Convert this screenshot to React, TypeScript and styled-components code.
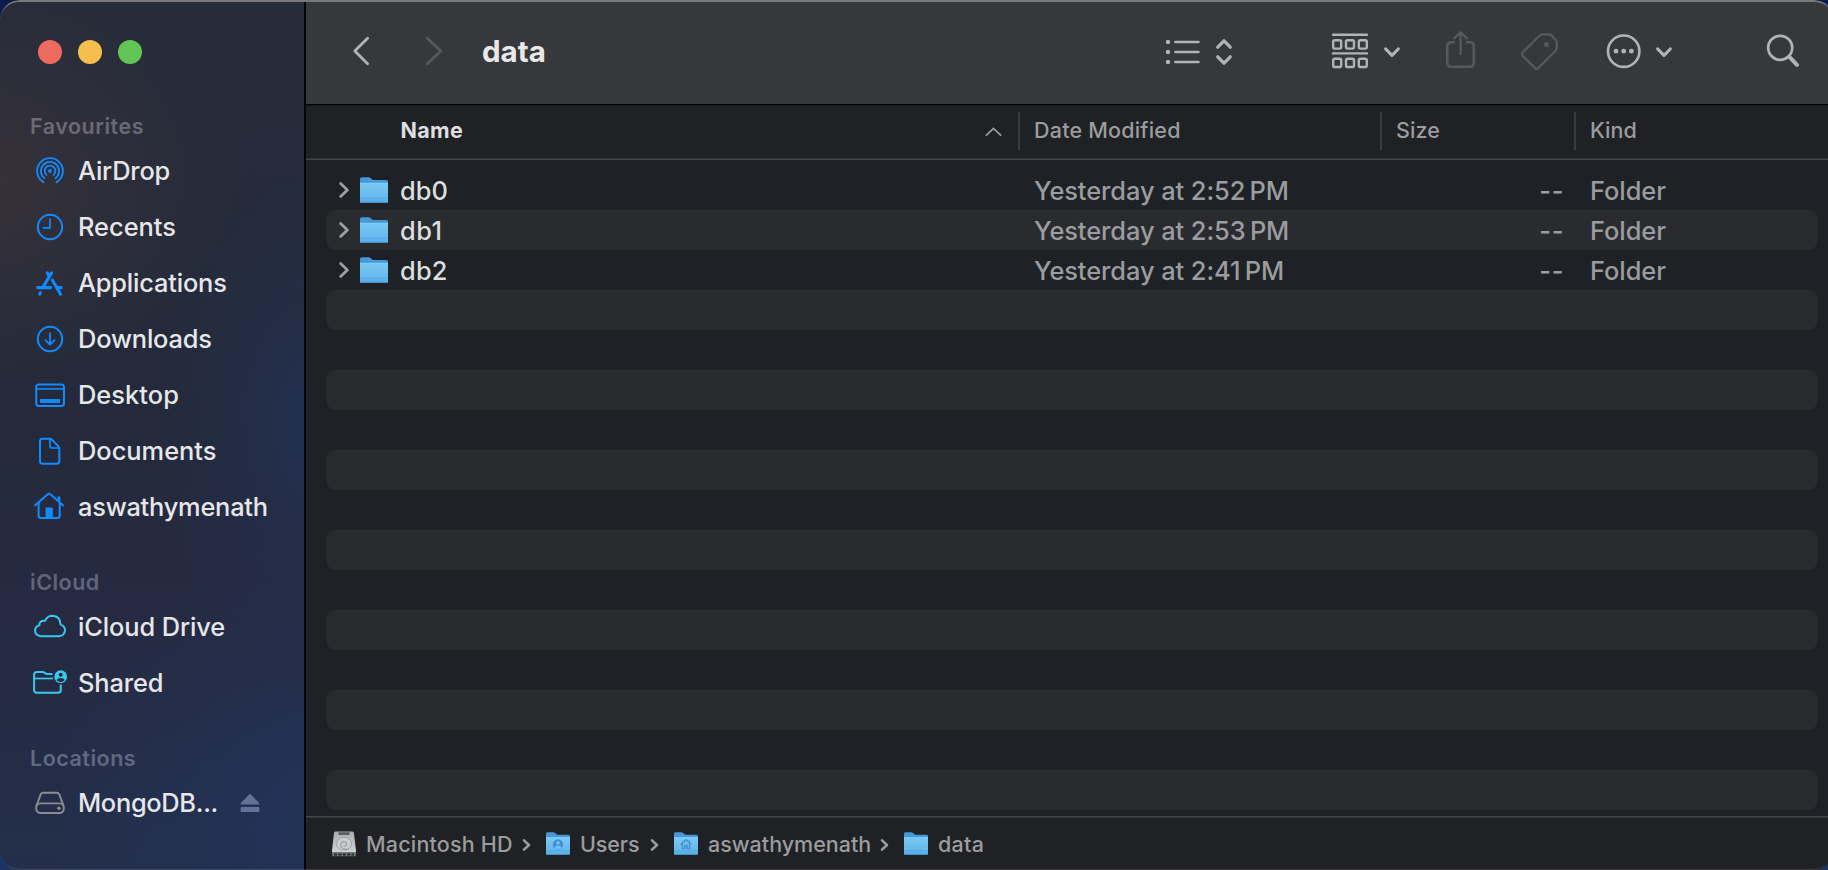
import React from "react";
import styled, { createGlobalStyle } from "styled-components";

const GlobalStyle = createGlobalStyle`
  *, *::before, *::after { box-sizing: border-box; }
  body { margin: 0; }
`;

const BLUE = "#118bff";
const CYAN = "#38c9ee";
const BRIGHT = "#b2b3b7";
const DIM = "#58595d";

const Desktop = styled.div`
  width: 1828px;
  height: 870px;
  overflow: hidden;
  position: relative;
  background: linear-gradient(180deg, #0b1d4c 0%, #0b1d4c 60%, #1b3560 100%);
  font-family: Inter, "Liberation Sans", sans-serif;
  font-weight: 500;
`;

const Window = styled.div`
  display: flex;
  width: 1834px;
  height: 870px;
  border-radius: 20px;
  overflow: hidden;
  position: relative;
`;

const WindowRim = styled.div`
  position: absolute;
  inset: 0;
  border-radius: 20px;
  border-top: 2px solid #77797d;
  border-bottom: 1px solid rgba(150, 152, 160, 0.25);
  pointer-events: none;
`;

const Text = styled.span<{ $track?: number }>`
  letter-spacing: ${(p) => p.$track ?? 0}px;
  white-space: pre;
`;

/* ---------- Sidebar ---------- */

const Sidebar = styled.nav`
  width: 306px;
  flex: none;
  display: flex;
  flex-direction: column;
  border-right: 2px solid #040507;
  background:
    radial-gradient(ellipse 260px 210px at -20px 180px, rgba(60, 51, 56, 0.8), rgba(60, 51, 56, 0.35) 50%, rgba(60, 51, 56, 0) 100%),
    radial-gradient(ellipse 160px 250px at 320px 425px, rgba(33, 50, 88, 0.85), rgba(33, 50, 88, 0.3) 50%, rgba(33, 50, 88, 0) 100%),
    radial-gradient(ellipse 280px 260px at 330px 820px, rgba(34, 51, 90, 0.95), rgba(34, 51, 90, 0.45) 50%, rgba(34, 51, 90, 0) 100%),
    linear-gradient(180deg, #262c3a 0%, #242a3b 50%, #262a41 66%, #252b43 78%, #232f4a 100%);
`;

const TrafficLights = styled.div`
  display: flex;
  gap: 16px;
  padding: 40px 0 0 38px;
  height: 109px;
`;

const Light = styled.span<{ $color: string }>`
  width: 24px;
  height: 24px;
  border-radius: 50%;
  background: ${(p) => p.$color};
`;

const Section = styled.section`
  display: flex;
  flex-direction: column;
  margin-bottom: 30px;
`;

const SectionTitle = styled.h2<{ $color: string }>`
  margin: 0;
  height: 34px;
  line-height: 34px;
  padding-left: 30px;
  font-size: 21.5px;
  font-weight: 600;
  letter-spacing: 0.5px;
  color: ${(p) => p.$color};
`;

const SidebarItem = styled.a`
  display: flex;
  align-items: center;
  height: 56px;
  padding-left: 32px;
  font-size: 25.4px;
  color: #e6e7ea;
`;

const ItemLabel = styled(Text)`
  padding-bottom: 2px;
`;

const ItemIcon = styled.svg<{ $color: string }>`
  width: 36px;
  height: 36px;
  flex: none;
  margin-right: 10px;
  fill: none;
  stroke: ${(p) => p.$color};
  stroke-width: 2;
  stroke-linecap: round;
  stroke-linejoin: round;
`;

const EjectIcon = styled.svg`
  width: 20px;
  height: 20px;
  margin: 0 0 1px 22px;
  fill: #65719a;
`;

/* ---------- Main pane ---------- */

const Main = styled.main`
  flex: 1;
  display: flex;
  flex-direction: column;
  background: #1e2125;
`;

const Toolbar = styled.header`
  display: flex;
  align-items: center;
  height: 105px;
  padding: 0 0 2px 44px;
  background: #37383b;
  border-bottom: 1px solid #000;
`;

const ToolGlyph = styled.svg<{ $before?: number; $color?: string; $weight?: number }>`
  flex: none;
  height: 40px;
  margin-left: ${(p) => p.$before ?? 0}px;
  fill: none;
  stroke: ${(p) => p.$color ?? BRIGHT};
  stroke-width: ${(p) => p.$weight ?? 2.6};
  stroke-linecap: round;
  stroke-linejoin: round;
`;

const Title = styled.h1`
  margin: 0 0 0 37px;
  width: 681px;
  font-size: 29.5px;
  font-weight: 700;
  color: #e8e8e9;
`;

const HeaderRow = styled.div`
  display: grid;
  grid-template-columns: 712px 362px 194px 1fr;
  align-items: center;
  height: 55px;
  padding-bottom: 5px;
  background: #202124;
  border-top: 1px solid #17181a;
  border-bottom: 1px solid #44474a;
  box-shadow: inset 0 -1px #2e3033;
  font-size: 21.5px;
  color: #9b9c9f;
`;

const NameHeader = styled.div`
  display: flex;
  align-items: center;
  justify-content: space-between;
  padding: 0 16px 0 94.5px;
  font-weight: 700;
  color: #dedee0;
`;

const ColumnHeader = styled.div`
  display: flex;
  align-items: center;
  gap: 14px;
  height: 38px;

  &::before {
    content: "";
    width: 2px;
    height: 38px;
    margin-top: 2px;
    background: #3a3b3f;
  }
`;

const Rows = styled.div`
  flex: 1;
  padding: 10px 16px 0 20px;
`;

const Row = styled.div<{ $striped: boolean }>`
  display: grid;
  grid-template-columns: 708px 341px 189px 1fr;
  align-items: center;
  height: 40px;
  border-radius: 10px;
  background: ${(p) => (p.$striped ? "#2a2b2f" : "transparent")};
  font-size: 25.4px;
  color: #9b9c9f;
`;

const NameCell = styled.div`
  display: flex;
  align-items: center;
  padding-left: 12px;
  color: #dcdddf;
`;

const SizeCell = styled.div`
  text-align: right;
`;

const KindCell = styled.div`
  padding-left: 26px;
`;

const Disclosure = styled.svg`
  width: 12px;
  height: 18px;
  margin-right: 10px;
  fill: none;
  stroke: #9fa0a3;
  stroke-width: 2.8;
  stroke-linecap: round;
  stroke-linejoin: round;
`;

const FolderSvg = styled.svg<{ $w: number; $h: number; $right: number; $lift: number }>`
  width: ${(p) => p.$w}px;
  height: ${(p) => p.$h}px;
  margin: 0 ${(p) => p.$right}px ${(p) => p.$lift}px 0;
  flex: none;
`;

const PathBar = styled.footer`
  display: flex;
  align-items: center;
  height: 54px;
  padding: 1px 0 0 25px;
  border-top: 1px solid #434649;
  box-shadow: inset 0 1px #313336;
  background: #202124;
  font-size: 21.5px;
  color: #9b9c9f;
`;

const Crumb = styled.div<{ $width: number }>`
  display: flex;
  align-items: center;
  width: ${(p) => p.$width}px;
`;

const CrumbArrow = styled.svg`
  width: 9px;
  height: 14px;
  margin-right: 15px;
  margin-top: 2px;
  fill: none;
  stroke: #9b9c9f;
  stroke-width: 2.6;
  stroke-linecap: round;
  stroke-linejoin: round;
`;

const DiskSvg = styled.svg`
  width: 26px;
  height: 26px;
  margin-right: 9px;
  flex: none;
`;

/* ---------- Drawings ---------- */

type FolderProps = { small?: boolean; badge?: "user" | "home" };

function Folder({ small, badge }: FolderProps) {
  return (
    <FolderSvg
      viewBox="0 0 28 26"
      preserveAspectRatio="none"
      $w={small ? 24 : 28}
      $h={small ? 23 : 26}
      $right={small ? 10 : 12}
      $lift={small ? 2 : 0}
    >
      <defs>
        <linearGradient id="folderFront" x1="0" y1="0" x2="0" y2="1">
          <stop offset="0" stopColor="#7ac8f6" />
          <stop offset="0.75" stopColor="#66b8ec" />
          <stop offset="1" stopColor="#55a9e2" />
        </linearGradient>
      </defs>
      <path d="M0 2Q0 0.2 1.8 0.2H8.5Q9.6 0.2 10.5 1L12 2.4Q12.8 3.1 14 3.1H26.4Q28 3.1 28 4.8V12H0Z" fill="#4599d8" />
      <path d="M0 5.9H28V24.4Q28 26 26.4 26H1.6Q0 26 0 24.4Z" fill="url(#folderFront)" />
      <path d="M0 6.2H28" stroke="#8ad2fa" strokeWidth="0.7" />
      <path d="M0 21.2H28" stroke="#4b9fd8" strokeWidth="0.7" />
      <path d="M0.4 25.5H27.6" stroke="#3f8fca" strokeWidth="0.9" />
      {badge === "user" && (
        <g>
          <circle cx="14" cy="14" r="5.9" fill="#3f8fd3" />
          <circle cx="14" cy="12.3" r="2.1" fill="#74c2f2" />
          <path d="M10 17.8Q10.6 15.4 14 15.4T18 17.8Q16.4 19.2 14 19.2T10 17.8Z" fill="#74c2f2" />
        </g>
      )}
      {badge === "home" && (
        <path
          d="M14 8.6L7.7 14.2M14 8.6L20.3 14.2M9.8 13V18.6H12.6V15.2H15.4V18.6H18.2V13M18 9.2V11.4"
          fill="none"
          stroke="#4894d2"
          strokeWidth="1.7"
        />
      )}
    </FolderSvg>
  );
}

function Disk() {
  return (
    <DiskSvg viewBox="0 0 26 26">
      <defs>
        <linearGradient id="diskTop" x1="0" y1="0" x2="0" y2="1">
          <stop offset="0" stopColor="#a9adb0" />
          <stop offset="1" stopColor="#cfd4d7" />
        </linearGradient>
      </defs>
      <path d="M4.6 0.6H21.2Q22.6 0.6 22.9 2L25 19.4V21.4H1V19.4L3 2Q3.2 0.6 4.6 0.6Z" fill="url(#diskTop)" />
      <path d="M1 21H25V23.8Q25 25.2 23.6 25.2H2.4Q1 25.2 1 23.8Z" fill="#6f7676" />
      <path d="M3 23.4H23" stroke="#242728" strokeWidth="2" strokeDasharray="3 1.4" />
      <path d="M7.4 2.6H18.6" stroke="#54585c" strokeWidth="2.6" />
      <ellipse cx="13" cy="12.8" rx="7.6" ry="6.4" fill="#c8cdd0" stroke="#9a9fa3" strokeWidth="0.8" />
      <path d="M17.6 18.4Q10 18.8 9.6 13.6Q9.8 10.4 13 10.6Q16 11 15.6 13.6Q15 15.6 12.6 15" fill="none" stroke="#84898d" strokeWidth="0.9" />
    </DiskSvg>
  );
}

const icons: Record<string, React.ReactNode> = {
  airdrop: (
    <g strokeWidth="1.8">
      <path d="M11.6 29.2A12.9 12.9 0 1 1 24.4 29.2" />
      <path d="M12.4 25.2A9.1 9.1 0 1 1 23.6 25.2" />
      <path d="M14.4 21.8A5.3 5.3 0 1 1 21.6 21.8" />
      <circle cx="18" cy="18" r="1.9" fill={BLUE} stroke="none" />
    </g>
  ),
  recents: (
    <g>
      <circle cx="18" cy="18" r="12.2" />
      <path d="M18 10.2V18.8H11.4" strokeWidth="1.7" />
    </g>
  ),
  applications: (
    <g strokeWidth="3.1">
      <path d="M19.6 7.8L11 22.3" />
      <path d="M15.2 7.8L16.6 10.2" />
      <path d="M20.4 15.2L28.6 29.2" />
      <path d="M5.6 22.6H18.6M25 22.6H29.2" />
      <path d="M8.4 27.8L7.7 29" />
    </g>
  ),
  downloads: (
    <g>
      <circle cx="18" cy="18" r="12.2" />
      <path d="M18 12.2V23.4M13.4 19.1L18 23.6L22.6 19.1" strokeWidth="1.8" />
    </g>
  ),
  desktop: (
    <g>
      <rect x="4.2" y="7.5" width="27.8" height="21.6" rx="2.8" />
      <path d="M5 11.9H31" strokeWidth="1.6" strokeLinecap="butt" />
      <rect x="8" y="21.9" width="20" height="4.2" rx="0.8" fill={BLUE} stroke="none" />
    </g>
  ),
  documents: (
    <g>
      <path d="M10.4 5.8H17.6Q19 5.8 20 6.8L26.4 13.4Q27.3 14.4 27.3 15.8V28Q27.3 30.8 24.5 30.8H10.7Q8 30.8 8 28V8.4Q8 5.8 10.4 5.8Z" />
      <path d="M18 6.4V13.2Q18 15 19.8 15H26.8" strokeWidth="1.7" />
    </g>
  ),
  home: (
    <g>
      <path d="M2.9 16.4L15.8 5.3Q17.1 4.2 18.4 5.3L31.2 16.4" />
      <path d="M6.6 14V26.6Q6.6 29.1 9.1 29.1H25.2Q27.7 29.1 27.7 26.6V14" />
      <path d="M26.9 7.4V12" strokeWidth="2.8" strokeLinecap="butt" />
      <rect x="13.6" y="18.4" width="7.2" height="10.6" rx="0.8" fill={BLUE} stroke="none" />
    </g>
  ),
  cloud: (
    <path d="M9.2 27.2Q3 26.8 3 21.6Q3.2 17.4 7.4 16.4Q7 11.4 13 11.8Q15.4 6.8 20.6 6.8Q28.4 7.4 28.6 15.6Q33 17 33 21.2Q32.6 26.8 26.8 27.2Z" />
  ),
  shared: (
    <g>
      <path d="M20.4 8.9H15.2Q14 8.9 13 8.1L12.2 7.4Q11.4 6.9 10.4 6.9H5Q2.1 6.9 2.1 9.8V25Q2.1 27.8 4.9 27.8H26Q28.8 27.8 28.8 25V19.6" strokeLinecap="butt" />
      <path d="M2.1 13.5H21.2" strokeWidth="1.7" strokeLinecap="butt" />
      <circle cx="28.7" cy="11.7" r="6.4" fill={CYAN} stroke="none" />
      <circle cx="28.7" cy="9.8" r="2" fill="#252b41" stroke="none" />
      <path d="M24.7 15.3Q25.4 12.9 28.7 12.9T32.7 15.3Q31 16.9 28.7 16.9T24.7 15.3Z" fill="#252b41" stroke="none" />
    </g>
  ),
  drive: (
    <g strokeWidth="1.9">
      <path d="M4.4 21L8.6 9.6Q9.4 7.8 11.4 7.8H24.6Q26.6 7.8 27.4 9.6L31.6 21" />
      <rect x="4.2" y="18.4" width="27.6" height="9.6" rx="4.4" />
      <circle cx="26.8" cy="23.2" r="1.7" fill="#8c8d92" stroke="none" />
    </g>
  ),
};

/* ---------- Data ---------- */

type Entry = { icon: string; label: string; track: number; eject?: boolean };
type Group = { title: string; tone: string; color: string; entries: Entry[] };

const groups: Group[] = [
  {
    title: "Favourites",
    tone: "#6b6973",
    color: BLUE,
    entries: [
      { icon: "airdrop", label: "AirDrop", track: -0.2 },
      { icon: "recents", label: "Recents", track: 0 },
      { icon: "applications", label: "Applications", track: -0.18 },
      { icon: "downloads", label: "Downloads", track: -0.17 },
      { icon: "desktop", label: "Desktop", track: 0.05 },
      { icon: "documents", label: "Documents", track: 0 },
      { icon: "home", label: "aswathymenath", track: -0.23 },
    ],
  },
  {
    title: "iCloud",
    tone: "#62647c",
    color: CYAN,
    entries: [
      { icon: "cloud", label: "iCloud Drive", track: -0.1 },
      { icon: "shared", label: "Shared", track: -0.1 },
    ],
  },
  {
    title: "Locations",
    tone: "#616981",
    color: "#8c8d92",
    entries: [{ icon: "drive", label: "MongoDB...", track: -0.3, eject: true }],
  },
];

const files = [
  { name: "db0", track: 0.1, modified: "Yesterday at 2:52\u2009PM" },
  { name: "db1", track: 0.5, modified: "Yesterday at 2:53\u2009PM" },
  { name: "db2", track: 0.2, modified: "Yesterday at 2:41\u2009PM" },
];

const ROW_COUNT = 16;

export default function App() {
  return (
    <Desktop>
      <GlobalStyle />
      <Window>
        <Sidebar>
          <TrafficLights>
            <Light $color="#ed6a5f" />
            <Light $color="#f5bf4f" />
            <Light $color="#62c655" />
          </TrafficLights>
          {groups.map((g) => (
            <Section key={g.title}>
              <SectionTitle $color={g.tone}>{g.title}</SectionTitle>
              {g.entries.map((e) => (
                <SidebarItem key={e.label}>
                  <ItemIcon viewBox="0 0 36 36" $color={g.color}>
                    {icons[e.icon]}
                  </ItemIcon>
                  <ItemLabel $track={e.track}>{e.label}</ItemLabel>
                  {e.eject && (
                    <EjectIcon viewBox="0 0 20 20">
                      <path d="M9 1.6Q10 0.6 11 1.6L19.3 10.2Q19.8 11.4 18.6 11.4H1.4Q0.2 11.4 0.7 10.2Z" />
                      <rect x="0.6" y="14" width="18.8" height="5" rx="1" />
                    </EjectIcon>
                  )}
                </SidebarItem>
              ))}
            </Section>
          ))}
        </Sidebar>

        <Main>
          <Toolbar>
            <ToolGlyph viewBox="350 31 22 40" width="22" $weight={2.8}>
              <path d="M367.6 38.3L354.8 51L367.6 63.7" />
            </ToolGlyph>
            <ToolGlyph viewBox="423 31 22 40" width="22" $before={51} $color={DIM} $weight={2.8}>
              <path d="M427.3 38.3L440.8 51L427.3 63.7" />
            </ToolGlyph>
            <Title>data</Title>
            <ToolGlyph viewBox="1163 31 40 40" width="40">
              <path d="M1175.4 42H1198.4M1175.4 52H1198.4M1175.4 62H1198.4" />
              <path d="M1168 42h0.01M1168 52h0.01M1168 62h0.01" strokeWidth="4.4" />
            </ToolGlyph>
            <ToolGlyph viewBox="1214 31 20 40" width="20" $before={11} $weight={3.2}>
              <path d="M1217.7 47.2L1224 40.8L1230.3 47.2M1217.7 56.8L1224 63.2L1230.3 56.8" />
            </ToolGlyph>
            <ToolGlyph viewBox="1330 31 40 40" width="40" $before={96}>
              <path d="M1333 34.7H1367M1333 53.4H1367" strokeWidth="2.4" />
              {[1333.2, 1346, 1358.8].map((x) => (
                <g key={x} strokeWidth="2.4">
                  <rect x={x} y="40.2" width="8" height="8.4" rx="1.6" />
                  <rect x={x} y="58.8" width="8" height="8.2" rx="1.6" />
                </g>
              ))}
            </ToolGlyph>
            <ToolGlyph viewBox="1382 31 20 40" width="20" $before={12} $weight={3.2}>
              <path d="M1385.7 49L1392 55.4L1398.3 49" />
            </ToolGlyph>
            <ToolGlyph viewBox="1444 31 34 40" width="34" $before={42} $color={DIM}>
              <path d="M1455 42.3H1451.3Q1447.3 42.3 1447.3 46.3V62.7Q1447.3 66.7 1451.3 66.7H1469.8Q1473.8 66.7 1473.8 62.7V46.3Q1473.8 42.3 1469.8 42.3H1466" strokeLinecap="butt" />
              <path d="M1460.6 54V33M1454.4 38.2L1460.6 32.3L1466.8 38.2" strokeWidth="2.3" />
            </ToolGlyph>
            <ToolGlyph viewBox="1519 31 42 40" width="42" $before={41} $color={DIM} $weight={2.3}>
              <path d="M1543 34.4H1548.6Q1550.4 34.4 1551.6 35.6L1555.6 39.8Q1556.8 41 1556.8 42.8V47.6Q1556.8 49.6 1555.4 51L1538.6 67.8Q1536.7 69.6 1534.8 67.8L1522.8 56Q1521 54.1 1522.8 52.2L1539.4 35.8Q1540.8 34.4 1543 34.4Z" />
              <circle cx="1546.5" cy="44.5" r="2.5" fill={DIM} stroke="none" />
            </ToolGlyph>
            <ToolGlyph viewBox="1604 31 40 40" width="40" $before={43}>
              <circle cx="1623.7" cy="51.2" r="15.7" />
              <path d="M1616 51.2h0.01M1623.7 51.2h0.01M1631.4 51.2h0.01" strokeWidth="4.8" />
            </ToolGlyph>
            <ToolGlyph viewBox="1654 31 20 40" width="20" $before={10} $weight={3.2}>
              <path d="M1657.7 49L1664 55.4L1670.3 49" />
            </ToolGlyph>
            <ToolGlyph viewBox="1764 31 40 40" width="40" $before={90} $weight={2.7}>
              <circle cx="1780.2" cy="47.8" r="12" />
              <path d="M1789.6 57.2L1797 64.8" strokeWidth="4" />
            </ToolGlyph>
          </Toolbar>

          <HeaderRow>
            <NameHeader>
              <Text $track={0.35}>Name</Text>
              <svg width="18" height="12" viewBox="0 0 18 12" fill="none" stroke="#9b9c9f" strokeWidth="1.8" strokeLinecap="round" transform="translate(0 2)">
                <path d="M2.4 9.2L9.5 2.4L16.6 9.2" />
              </svg>
            </NameHeader>
            <ColumnHeader>
              <Text $track={0.2}>Date Modified</Text>
            </ColumnHeader>
            <ColumnHeader>
              <Text $track={0.1}>Size</Text>
            </ColumnHeader>
            <ColumnHeader>
              <Text>Kind</Text>
            </ColumnHeader>
          </HeaderRow>

          <Rows>
            {Array.from({ length: ROW_COUNT }, (_, i) => {
              const f = files[i];
              return (
                <Row key={i} $striped={i % 2 === 1}>
                  {f && (
                    <>
                      <NameCell>
                        <Disclosure viewBox="0 0 12 18">
                          <path d="M2.6 2.6L9.4 9L2.6 15.4" />
                        </Disclosure>
                        <Folder />
                        <Text $track={f.track}>{f.name}</Text>
                      </NameCell>
                      <Text $track={-0.06}>{f.modified}</Text>
                      <SizeCell>
                        <Text $track={0.6}>--</Text>
                      </SizeCell>
                      <KindCell>
                        <Text $track={-0.04}>Folder</Text>
                      </KindCell>
                    </>
                  )}
                </Row>
              );
            })}
          </Rows>

          <PathBar>
            <Crumb $width={191}>
              <Disk />
              <Text $track={0.19}>Macintosh HD</Text>
            </Crumb>
            <CrumbArrow viewBox="0 0 9 14">
              <path d="M2 2.4L7 7L2 11.6" />
            </CrumbArrow>
            <Crumb $width={104}>
              <Folder small badge="user" />
              <Text $track={-0.1}>Users</Text>
            </Crumb>
            <CrumbArrow viewBox="0 0 9 14">
              <path d="M2 2.4L7 7L2 11.6" />
            </CrumbArrow>
            <Crumb $width={206}>
              <Folder small badge="home" />
              <Text>aswathymenath</Text>
            </Crumb>
            <CrumbArrow viewBox="0 0 9 14">
              <path d="M2 2.4L7 7L2 11.6" />
            </CrumbArrow>
            <Crumb $width={90}>
              <Folder small />
              <Text $track={0.3}>data</Text>
            </Crumb>
          </PathBar>
        </Main>
        <WindowRim />
      </Window>
    </Desktop>
  );
}
